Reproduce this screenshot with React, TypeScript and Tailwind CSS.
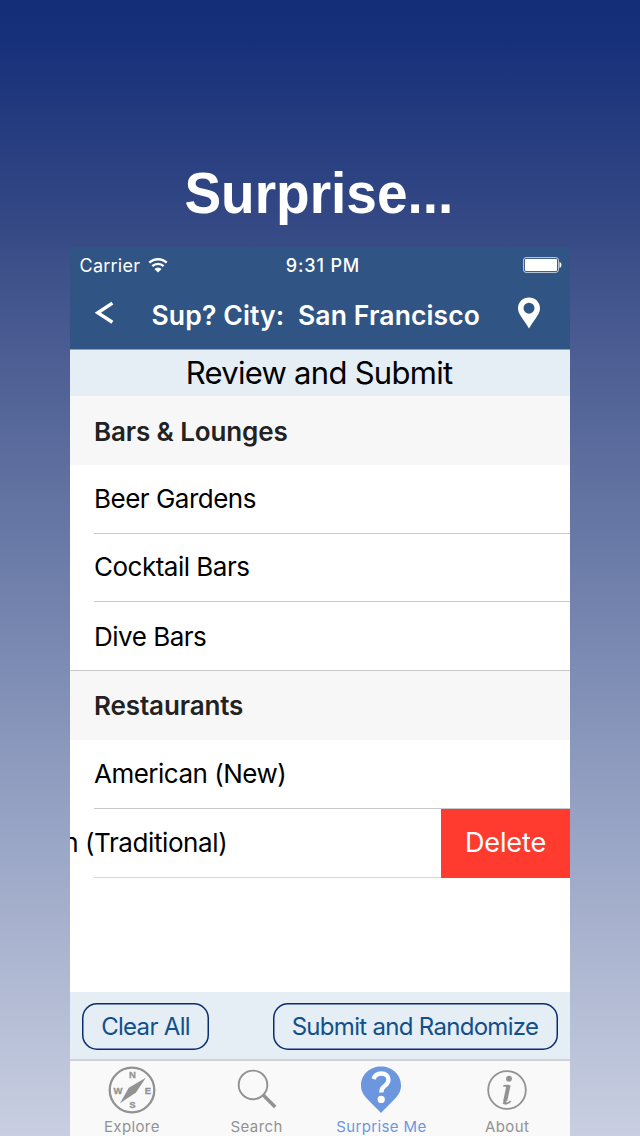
import React from "react";

function StatusBar() {
  return (
    <div className="grid h-9 grid-cols-[180px_1fr_180px] items-center text-[18px] leading-none">
      <div className="flex items-center gap-[8px] pl-[9.5px]">
        <span className="pt-[2px] tracking-[0.25px]">Carrier</span>
        <svg width="20" height="15" viewBox="0 0 19 15" fill="none" stroke="white" strokeWidth="2.4">
          <path d="M.8 4.7a12.6 12.6 0 0 1 17.4 0M3.8 8.2a8.2 8.2 0 0 1 11.4 0" />
          <path d="M9.5 14.5 5.9 11a5 5 0 0 1 7.2 0Z" fill="white" stroke="none" />
        </svg>
      </div>
      <span className="whitespace-nowrap pl-[6px] pt-[2px] text-center font-medium tracking-[0.85px]">9:31 PM</span>
      <svg className="mr-[8px] justify-self-end" width="39" height="16" viewBox="0 0 39 16">
        <rect x=".6" y=".6" width="34.8" height="14.8" rx="2.5" fill="none" stroke="#c7d1de" />
        <rect x="2" y="2" width="32" height="12" rx="1" fill="white" />
        <path d="M36.5 5q2 .7 2 3t-2 3z" fill="white" />
      </svg>
    </div>
  );
}

function NavBar() {
  return (
    <div className="flex h-[67px] items-center border-b border-[#8d9eb7]">
      <svg className="mb-[6px] ml-[24px]" width="20" height="24" viewBox="0 0 20 24" fill="none" stroke="white" strokeWidth="3.4">
        <path d="M18.4 2.2 3.8 11.8 18.4 21.2" />
      </svg>
      <h2 className="ml-[37.5px] w-[329px] whitespace-pre pb-px text-[26.5px] font-semibold leading-none tracking-[0.13px]">Sup? City:  San Francisco</h2>
      <svg className="mb-[7px] ml-[36px]" width="24" height="32" viewBox="0 0 24 32">
        <path fillRule="evenodd" fill="white" d="M12 .5C5.8.5 1 5.1 1 11.3 1 15 3 18 5.2 21.2 7.9 24.8 10 28 12 31.5c2-3.5 4.1-6.7 6.8-10.3C21 18 23 15 23 11.3 23 5.1 18.2.5 12 .5Zm0 5.2a5.5 5.5 0 1 1 0 11 5.5 5.5 0 0 1 0-11Z" />
      </svg>
    </div>
  );
}

function SectionHeader({ children }: { children: React.ReactNode }) {
  return (
    <h3 className="flex h-[69px] items-center bg-[#f7f7f7] pl-6 pt-px text-[26px] font-semibold tracking-[-0.12px] text-[#222]">{children}</h3>
  );
}

function Row({ children, last = false }: { children: React.ReactNode; last?: boolean }) {
  return (
    <div className={last ? "flex h-[68.67px] border-b border-[#c8c7cc] pl-6" : "flex h-[68.67px] pl-6"}>
      <div className={last ? "flex flex-1 items-center text-[26px] tracking-[-0.5px]" : "flex flex-1 items-center border-b border-[#c8c7cc] pb-px text-[26px] tracking-[-0.5px]"}>
        {children}
      </div>
    </div>
  );
}

function CompassIcon() {
  return (
    <svg width="48" height="48" viewBox="0 0 48 48" fill="#929292">
      <circle cx="24" cy="24" r="22.3" fill="none" stroke="#929292" strokeWidth="2.3" />
      <path d="M37.8 11.8 28 26.5 12 37.2 20.8 21.8Z" />
      <g fontFamily="Liberation Sans, sans-serif" fontSize="9.5" fontWeight="bold" textAnchor="middle" stroke="#929292" strokeWidth=".3">
        <text x="24.5" y="12">N</text>
        <text x="39.8" y="27.5">E</text>
        <text x="24.3" y="42.3">S</text>
        <text x="10" y="27.5">W</text>
      </g>
    </svg>
  );
}

function SearchIcon() {
  return (
    <svg width="48" height="48" viewBox="0 0 48 48" fill="none" stroke="#929292">
      <circle cx="20" cy="18.9" r="14.3" strokeWidth="1.9" />
      <path d="m30.2 29 12 12" strokeWidth="3.5" />
    </svg>
  );
}

function SurpriseIcon() {
  return (
    <svg width="48" height="48" viewBox="0 0 48 48">
      <path d="M24 .5C12.8.5 4 8.7 4 19.5c0 6.5 3.2 10.3 8 15.3C16 39 21 44 24 47c3-3 8-8 12-12.2 4.8-5 8-8.8 8-15.3C44 8.7 35.2.5 24 .5Z" fill="#6c97de" />
      <path d="M16.5 13c1.5-4.5 4-5.5 7.8-5.5 4.8 0 7.2 2.8 7.2 6.2 0 3.6-2.2 5-4.5 6.8-2 1.6-2.7 2.8-2.7 6" fill="none" stroke="white" strokeWidth="4.3" />
      <circle cx="24.2" cy="33.4" r="3.6" fill="white" />
    </svg>
  );
}

function InfoIcon() {
  return (
    <svg width="48" height="48" viewBox="0 0 48 48" fill="none" stroke="#929292">
      <circle cx="24" cy="24" r="18.8" strokeWidth="1.8" />
      <circle cx="26" cy="12.7" r="2.9" fill="#929292" stroke="none" />
      <path d="M20.3 19.8h5.6M20 37q4.2 1.8 7.6-2" strokeWidth="1.8" />
      <path d="M25.6 19 22.3 34.5q-.3 2 1 2" strokeWidth="4" />
    </svg>
  );
}

function Tab({ icon, label, active = false }: { icon: React.ReactNode; label: string; active?: boolean }) {
  return (
    <div className={active ? "flex flex-1 flex-col items-center pr-[2px] pt-[5px] text-[#6c97de]" : "flex flex-1 flex-col items-center pr-px pt-[5px] text-[#929292]"}>
      {icon}
      <span className="mt-[4px] whitespace-nowrap text-[15px] leading-[18px] tracking-[0.38px]">{label}</span>
    </div>
  );
}

export default function App() {
  return (
    <main className="flex h-[1136px] w-[640px] flex-col items-center overflow-hidden bg-[linear-gradient(180deg,#142e77_0px,#17307a_40px,#364a85_235px,#3d5089_265px,#93a0c2_800px,#c9cfe1_1136px)] font-['Inter',sans-serif]">
      <h1 className="h-[247px] scale-x-[0.948] pr-[2px] pt-[160px] font-['Liberation_Sans',sans-serif] text-[58px] font-bold leading-[66px] text-white">Surprise...</h1>
      <section className="flex w-[500px] flex-1 flex-col overflow-hidden bg-white text-black">
        <header className="h-[103px] bg-[#305483] text-white">
          <StatusBar />
          <NavBar />
        </header>
        <div className="flex h-[46px] items-center justify-center bg-[#e5edf5] pb-[2px] pr-[2px] text-[31px] leading-none tracking-[-0.72px]">Review and Submit</div>
        <SectionHeader>Bars &amp; Lounges</SectionHeader>
        <Row>Beer Gardens</Row>
        <Row>Cocktail Bars</Row>
        <Row last>Dive Bars</Row>
        <SectionHeader>Restaurants</SectionHeader>
        <Row>American (New)</Row>
        <div className="flex h-[69px]">
          <div className="flex w-6 justify-end overflow-hidden text-[26px] leading-[67px] tracking-[-0.45px]">
            <span className="whitespace-pre">American (</span>
          </div>
          <div className="flex flex-1 border-b border-[#d8d8dc]">
            <span className="flex-1 text-[26px] leading-[67px] tracking-[-0.4px]">Traditional)</span>
            <button className="h-[69px] w-[129px] bg-[#ff3b30] pt-px text-[27px] tracking-[-0.1px] text-white">Delete</button>
          </div>
        </div>
        <div className="flex-1" />
        <div className="flex h-[67px] items-center justify-between bg-[#e5edf5] px-[12px] pt-px text-[24px] text-[#11508b]">
          <button className="h-[47px] w-[127px] rounded-[15px] pt-px tracking-[-0.7px] shadow-[inset_0_0_0_1.5px_#082d70]">Clear All</button>
          <button className="h-[47px] w-[285px] rounded-[15px] pr-px pt-px tracking-[-0.7px] shadow-[inset_0_0_0_1.5px_#082d70]">Submit and Randomize</button>
        </div>
        <nav className="flex h-[77px] border-t-2 border-[#d0d2d5] bg-[#f9f9f9]">
          <Tab icon={<CompassIcon />} label="Explore" />
          <Tab icon={<SearchIcon />} label="Search" />
          <Tab icon={<SurpriseIcon />} label="Surprise Me" active />
          <Tab icon={<InfoIcon />} label="About" />
        </nav>
      </section>
    </main>
  );
}
